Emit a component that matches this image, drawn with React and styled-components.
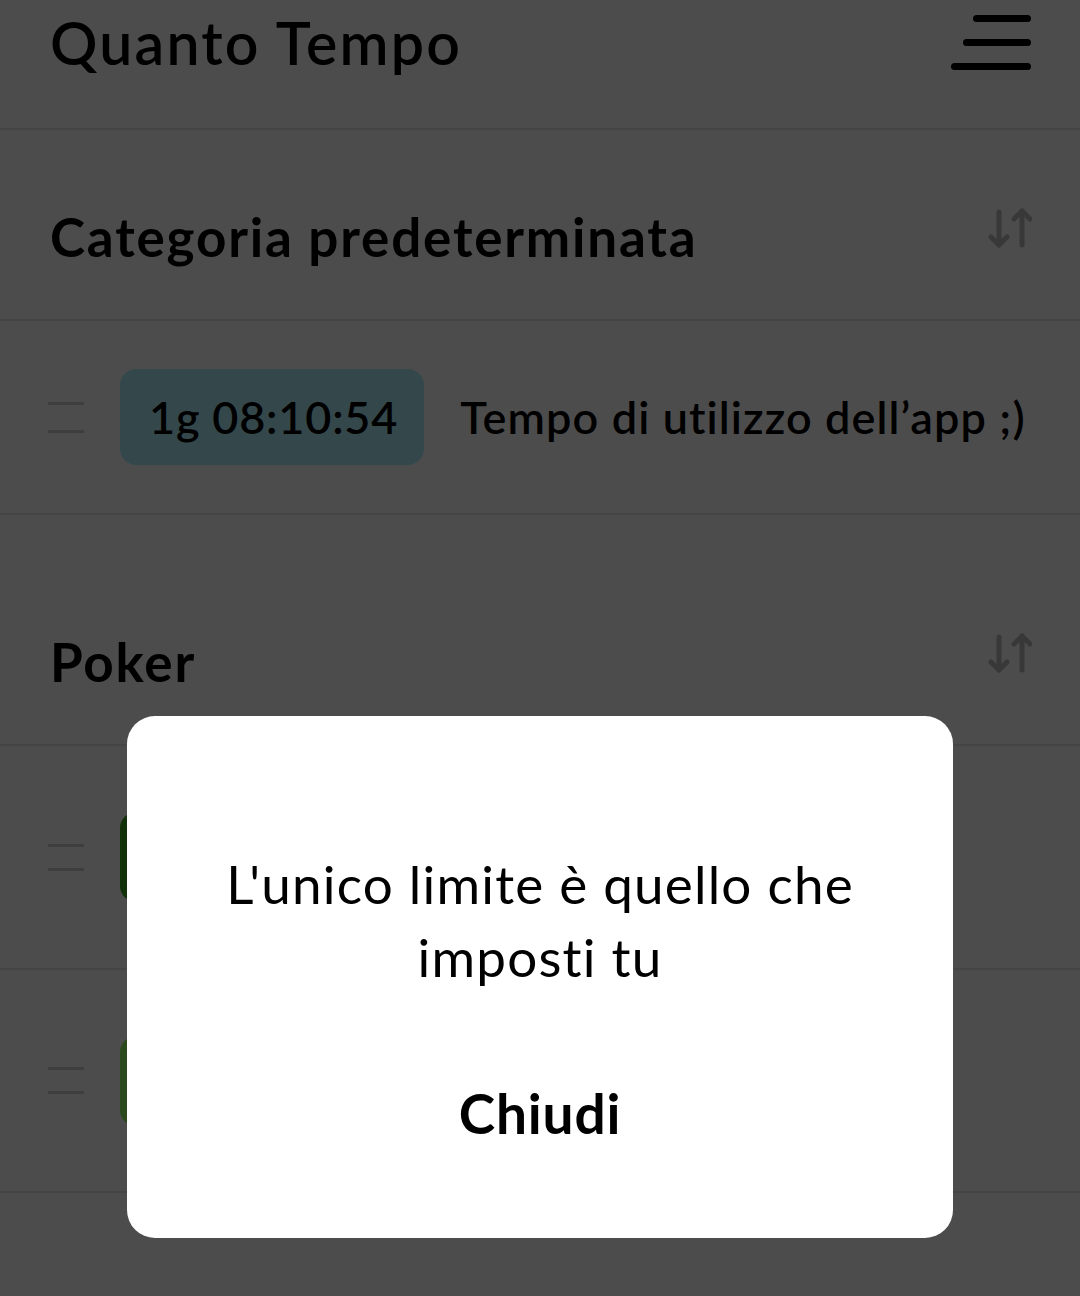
import React from 'react';
import styled, {createGlobalStyle} from 'styled-components';

const GlobalStyle = createGlobalStyle`
    html, body {
        margin: 0;
        padding: 0;
        background: #ffffff;
    }
    body {
        font-family: Lato, "Noto Sans", "Liberation Sans", sans-serif;
        color: #000;
    }
`;

const Page = styled.div`
    width: 1080px;
    height: 1296px;
    overflow: hidden;
    background: #ffffff;
`;

const Header = styled.header`
    box-sizing: border-box;
    height: 130px;
    display: flex;
    justify-content: space-between;
    align-items: flex-start;
    padding: 0 49px 0 50px;
    border-bottom: 2px solid #e6e6e6;
`;

const Title = styled.h1`
    margin: 0;
    margin-top: 10px;
    font-size: 59px;
    line-height: 66px;
    font-weight: 600;
    letter-spacing: 2.2px;
`;

const MenuButton = styled.button`
    display: flex;
    flex-direction: column;
    align-items: flex-end;
    gap: 17px;
    margin-top: 15px;
    padding: 0;
    border: none;
    background: none;
`;

const MenuLine = styled.span`
    display: block;
    width: ${p => p.$w}px;
    height: 7px;
    border-radius: 4px;
    background: #000;
`;

const Section = styled.section`
    margin-bottom: 40px;
`;

const SectionHeader = styled.div`
    box-sizing: border-box;
    height: 191px;
    display: flex;
    justify-content: space-between;
    align-items: center;
    padding: 24px 50px 0 50px;
    border-bottom: 2px solid #e6e6e6;
`;

const SectionTitle = styled.h2`
    margin: 0;
    font-size: 53px;
    font-weight: 700;
    letter-spacing: 1.8px;
`;

const SortIcon = styled.svg`
    width: 44px;
    height: 40px;
    margin-bottom: 17px;
    margin-right: -2px;
`;

const Row = styled.div`
    box-sizing: border-box;
    min-height: ${p => p.$h}px;
    display: flex;
    align-items: center;
    gap: 36px;
    padding: 0 50px 0 48px;
    border-bottom: 2px solid #e6e6e6;
`;

const Handle = styled.span`
    display: flex;
    flex-direction: column;
    gap: ${p => p.$gap}px;
    width: 36px;

    &::before, &::after {
        content: '';
        display: block;
        height: 3px;
        background: #d0d0d0;
    }
`;

const TimePill = styled.span`
    box-sizing: border-box;
    height: ${p => p.$h}px;
    display: flex;
    align-items: center;
    padding: 0 26px 0 29px;
    border-radius: 16px;
    background: ${p => p.$bg};
    font-size: 45px;
    font-weight: 600;
    letter-spacing: 0.8px;
`;

const RowLabel = styled.span`
    font-size: 45px;
    font-weight: 600;
    letter-spacing: 1.1px;
`;

const Overlay = styled.div`
    position: fixed;
    inset: 0;
    display: flex;
    justify-content: center;
    align-items: flex-start;
    padding-top: 716px;
    background: rgba(0, 0, 0, 0.7);
`;

const Dialog = styled.div`
    box-sizing: border-box;
    width: 826px;
    height: 522px;
    display: flex;
    flex-direction: column;
    align-items: center;
    padding-top: 131px;
    border-radius: 28px;
    background: #ffffff;
`;

const Message = styled.p`
    margin: 0;
    width: 700px;
    text-align: center;
    font-size: 53px;
    line-height: 73px;
    font-weight: 400;
    letter-spacing: 1.2px;
`;

const CloseButton = styled.button`
    margin-top: 84px;
    padding: 0;
    border: none;
    background: none;
    font-family: inherit;
    font-size: 55px;
    line-height: 73px;
    font-weight: 700;
    letter-spacing: 0.8px;
    color: #000;
`;

function SortArrows() {
    return (
        <SortIcon viewBox="0 0 44 40" fill="none" stroke="#bbbbbb" strokeWidth="5" strokeLinecap="round" strokeLinejoin="round">
            <path d="M11 4 V37" />
            <path d="M3 29 L11 37 L19 29" />
            <path d="M34 3 V37" />
            <path d="M26 11 L34 3 L42 11" />
        </SortIcon>
    );
}

const categories = [
    {
        name: 'Categoria predeterminata',
        rows: [{time: '1g 08:10:54', label: 'Tempo di utilizzo dell\u2019app ;)', color: '#aef0ff', h: 194, pill: 96, gap: 25}],
    },
    {
        name: 'Poker',
        rows: [
            {time: '0g 03:42:17', label: 'Torneo', color: '#3aa81f', h: 224, pill: 90, gap: 21},
            {time: '0g 01:05:09', label: 'Cash game', color: '#8cf764', h: 223, pill: 90, gap: 21},
        ],
    },
];

export default function App() {
    return (
        <>
            <GlobalStyle />
            <Page>
                <Header>
                    <Title>Quanto Tempo</Title>
                    <MenuButton aria-label="Menu">
                        <MenuLine $w={58} />
                        <MenuLine $w={68} />
                        <MenuLine $w={80} />
                    </MenuButton>
                </Header>

                {categories.map(cat => (
                    <Section key={cat.name}>
                        <SectionHeader>
                            <SectionTitle>{cat.name}</SectionTitle>
                            <SortArrows />
                        </SectionHeader>
                        {cat.rows.map(row => (
                            <Row key={row.time} $h={row.h}>
                                <Handle $gap={row.gap} />
                                <TimePill $bg={row.color} $h={row.pill}>{row.time}</TimePill>
                                <RowLabel>{row.label}</RowLabel>
                            </Row>
                        ))}
                    </Section>
                ))}
            </Page>

            <Overlay>
                <Dialog role="dialog">
                    <Message>L'unico limite è quello che imposti tu</Message>
                    <CloseButton>Chiudi</CloseButton>
                </Dialog>
            </Overlay>
        </>
    );
}
